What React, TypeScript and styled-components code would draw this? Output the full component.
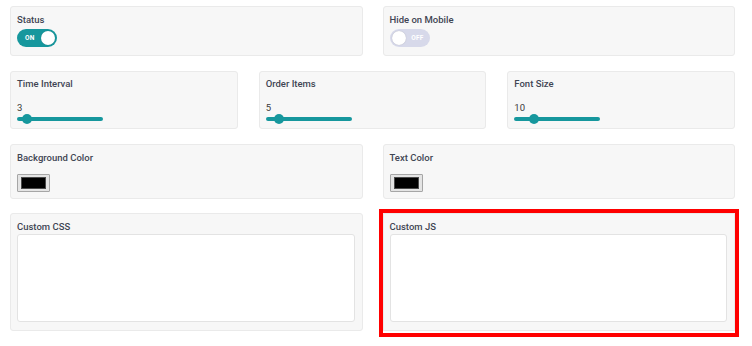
import React from "react";
import styled, { createGlobalStyle } from "styled-components";

const GlobalStyle = createGlobalStyle`
  html, body { margin: 0; padding: 0; background: #ffffff; }
  body { font-family: Roboto, "Liberation Sans", Arial, sans-serif; }
  * { box-sizing: border-box; }
`;

const TEAL = "#16979d";

const Page = styled.div`
  width: 752px;
  padding: 6px 17px 12px 10px;
  display: flex;
  flex-direction: column;
  gap: 15px;
`;

const Row = styled.div<{ $cols: number; $gap: number; $mt?: number }>`
  display: grid;
  grid-template-columns: repeat(${(p) => p.$cols}, 1fr);
  column-gap: ${(p) => p.$gap}px;
  margin-top: ${(p) => p.$mt ?? 0}px;
`;

const Card = styled.div<{ $square?: boolean; $pt?: number; $pb?: number }>`
  background: #f7f7f7;
  border: 1px solid #eaeaea;
  border-radius: ${(p) => (p.$square ? 0 : 3)}px;
  padding: ${(p) => p.$pt ?? 7}px 7px ${(p) => p.$pb ?? 7}px 6px;
  display: flex;
  flex-direction: column;
  align-items: flex-start;
  height: 100%;
`;

const Highlight = styled.div`
  margin: -4px -4px -6px;
  border: 4px solid #ff0000;
  padding-bottom: 2px;
`;

const Label = styled.div<{ $mb?: number }>`
  font-size: 9.5px;
  line-height: 12px;
  font-weight: 500;
  color: #3f4553;
  margin-bottom: ${(p) => p.$mb ?? 0}px;
`;

const Value = styled.div`
  font-size: 9.5px;
  line-height: 12px;
  color: #3a3a3a;
`;

const Toggle = styled.div<{ $on: boolean }>`
  width: 40px;
  height: 18px;
  border-radius: 9px;
  background: ${(p) => (p.$on ? TEAL : "#d7d9ea")};
  display: flex;
  align-items: center;
  flex-direction: ${(p) => (p.$on ? "row" : "row-reverse")};
  justify-content: space-between;
  padding: 0 ${(p) => (p.$on ? 2 : 6)}px 0 ${(p) => (p.$on ? 8 : 2)}px;
  margin-top: 3px;
`;

const ToggleText = styled.span`
  font-size: 6.5px;
  font-weight: 700;
  color: #ffffff;
  letter-spacing: 0.2px;
`;

const Knob = styled.span`
  width: 14px;
  height: 14px;
  border-radius: 50%;
  background: #ffffff;
  box-shadow: 0 0 1px rgba(0, 0, 0, 0.25);
`;

const SliderWrap = styled.div`
  position: relative;
  width: 86px;
  height: 10px;
  display: flex;
  align-items: center;
`;

const Track = styled.div`
  width: 100%;
  height: 4px;
  border-radius: 2px;
  background: ${TEAL};
`;

const Thumb = styled.span`
  position: absolute;
  top: 0;
  width: 10px;
  height: 10px;
  margin-left: -5px;
  border-radius: 50%;
  background: ${TEAL};
`;

const Swatch = styled.div`
  width: 33px;
  height: 18px;
  border: 1px solid #a6a6a6;
  background: #e4e4e4;
  padding: 2px 3px;
  margin-top: 10px;
  border-radius: 1px;
`;

const SwatchFill = styled.div`
  width: 100%;
  height: 100%;
  background: #000000;
  border: 1px solid #4a4a4a;
`;

const TextArea = styled.textarea`
  display: block;
  width: 100%;
  height: 88px;
  margin: 1px 0 0;
  background: #ffffff;
  border: 1px solid #e3e3e3;
  border-radius: 3px;
  resize: none;
  outline: none;
  padding: 4px;
  font-family: inherit;
`;

function SliderCard({ label, value, pos }: { label: string; value: string; pos: number }) {
  return (
    <Card $pt={6} $pb={4}>
      <Label $mb={12}>{label}</Label>
      <Value>{value}</Value>
      <SliderWrap>
        <Track />
        <Thumb style={{ left: `${pos}px` }} />
      </SliderWrap>
    </Card>
  );
}

export default function App() {
  return (
    <>
      <GlobalStyle />
      <Page>
        <Row $cols={2} $gap={20}>
          <Card $pb={8}>
            <Label>Status</Label>
            <Toggle $on>
              <ToggleText>ON</ToggleText>
              <Knob />
            </Toggle>
          </Card>
          <Card $pb={8}>
            <Label>Hide on Mobile</Label>
            <Toggle $on={false}>
              <ToggleText>OFF</ToggleText>
              <Knob />
            </Toggle>
          </Card>
        </Row>
        <Row $cols={3} $gap={21}>
          <SliderCard label="Time Interval" value="3" pos={10} />
          <SliderCard label="Order Items" value="5" pos={13} />
          <SliderCard label="Font Size" value="10" pos={20} />
        </Row>
        <Row $cols={2} $gap={20}>
          <Card $pb={6}>
            <Label>Background Color</Label>
            <Swatch>
              <SwatchFill />
            </Swatch>
          </Card>
          <Card $pb={6}>
            <Label>Text Color</Label>
            <Swatch>
              <SwatchFill />
            </Swatch>
          </Card>
        </Row>
        <Row $cols={2} $gap={20} $mt={-1}>
          <Card $pt={7} $pb={8}>
            <Label>Custom CSS</Label>
            <TextArea />
          </Card>
          <Highlight>
            <Card $pt={7} $pb={8} $square>
              <Label>Custom JS</Label>
              <TextArea />
            </Card>
          </Highlight>
        </Row>
      </Page>
    </>
  );
}
